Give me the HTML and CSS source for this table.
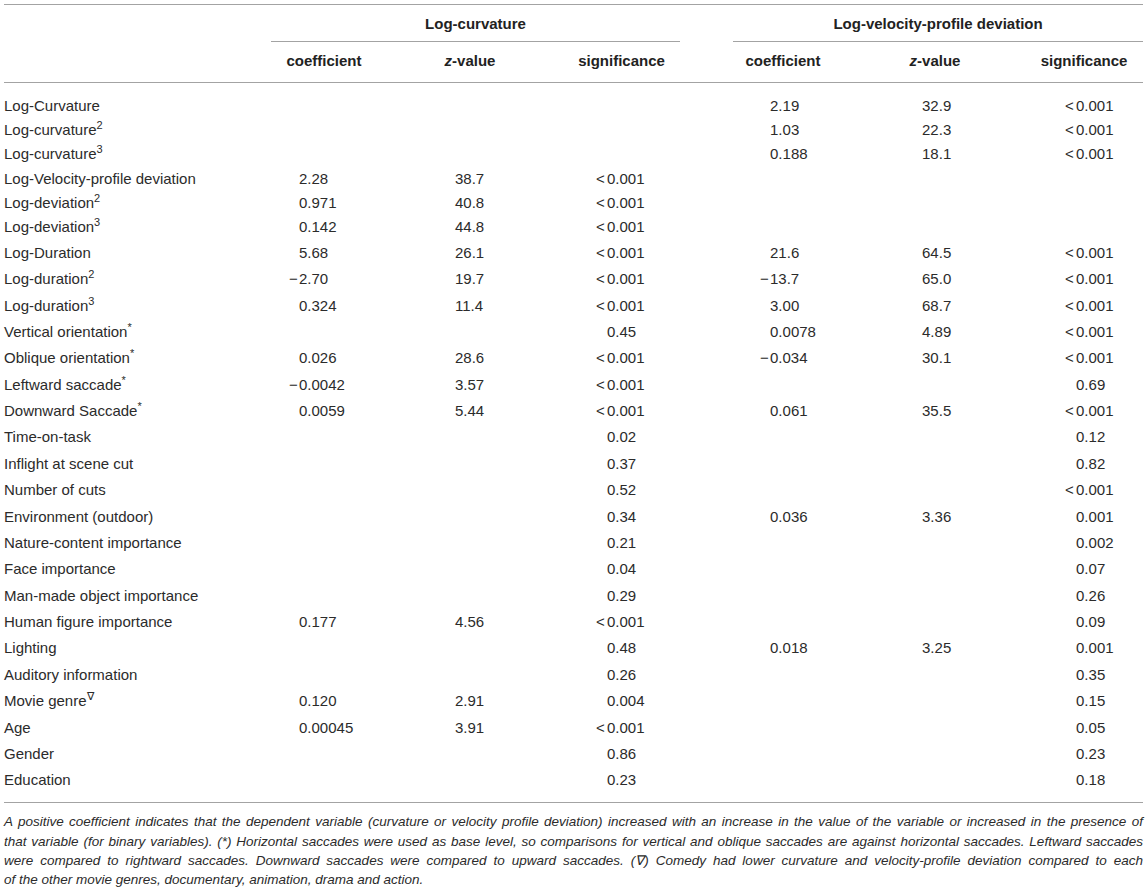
FILE: index.html
```html
<!DOCTYPE html>
<html>
<head>
<meta charset="utf-8">
<title>Table</title>
<link rel="stylesheet" href="styles.css">
</head>
<body>
<div class="page">
<table class="stats">
  <colgroup>
    <col class="c-lab"><col class="c-coef"><col class="c-z"><col class="c-sig">
    <col class="c-gap">
    <col class="c-coef2"><col class="c-z2"><col class="c-sig2">
  </colgroup>
  <thead>
    <tr class="grp">
      <th></th>
      <th colspan="3" class="grp-title">Log-curvature</th>
      <th></th>
      <th colspan="3" class="grp-title">Log-velocity-profile deviation</th>
    </tr>
    <tr class="sub">
      <th></th>
      <th>coefficient</th>
      <th><i>z</i>-value</th>
      <th>significance</th>
      <th></th>
      <th>coefficient</th>
      <th><i>z</i>-value</th>
      <th class="sig2">significance</th>
    </tr>
  </thead>
  <tbody>
    <tr class="tight first"><td>Log-Curvature</td><td class="v1"></td><td class="v2"></td><td class="v3"></td><td></td><td class="v4">2.19</td><td class="v5">32.9</td><td class="v6"><span class="lt">&lt;</span>0.001</td></tr>
    <tr class="tight"><td>Log-curvature<sup>2</sup></td><td class="v1"></td><td class="v2"></td><td class="v3"></td><td></td><td class="v4">1.03</td><td class="v5">22.3</td><td class="v6"><span class="lt">&lt;</span>0.001</td></tr>
    <tr class="tight"><td>Log-curvature<sup>3</sup></td><td class="v1"></td><td class="v2"></td><td class="v3"></td><td></td><td class="v4">0.188</td><td class="v5">18.1</td><td class="v6"><span class="lt">&lt;</span>0.001</td></tr>
    <tr class="tight"><td>Log-Velocity-profile deviation</td><td class="v1">2.28</td><td class="v2">38.7</td><td class="v3"><span class="lt">&lt;</span>0.001</td><td></td><td class="v4"></td><td class="v5"></td><td class="v6"></td></tr>
    <tr class="tight"><td>Log-deviation<sup>2</sup></td><td class="v1">0.971</td><td class="v2">40.8</td><td class="v3"><span class="lt">&lt;</span>0.001</td><td></td><td class="v4"></td><td class="v5"></td><td class="v6"></td></tr>
    <tr class="tight"><td>Log-deviation<sup>3</sup></td><td class="v1">0.142</td><td class="v2">44.8</td><td class="v3"><span class="lt">&lt;</span>0.001</td><td></td><td class="v4"></td><td class="v5"></td><td class="v6"></td></tr>
    <tr><td>Log-Duration</td><td class="v1">5.68</td><td class="v2">26.1</td><td class="v3"><span class="lt">&lt;</span>0.001</td><td></td><td class="v4">21.6</td><td class="v5">64.5</td><td class="v6"><span class="lt">&lt;</span>0.001</td></tr>
    <tr><td>Log-duration<sup>2</sup></td><td class="v1"><span class="neg">&minus;</span>2.70</td><td class="v2">19.7</td><td class="v3"><span class="lt">&lt;</span>0.001</td><td></td><td class="v4"><span class="neg">&minus;</span>13.7</td><td class="v5">65.0</td><td class="v6"><span class="lt">&lt;</span>0.001</td></tr>
    <tr><td>Log-duration<sup>3</sup></td><td class="v1">0.324</td><td class="v2">11.4</td><td class="v3"><span class="lt">&lt;</span>0.001</td><td></td><td class="v4">3.00</td><td class="v5">68.7</td><td class="v6"><span class="lt">&lt;</span>0.001</td></tr>
    <tr><td>Vertical orientation<sup>*</sup></td><td class="v1"></td><td class="v2"></td><td class="v3">0.45</td><td></td><td class="v4">0.0078</td><td class="v5">4.89</td><td class="v6"><span class="lt">&lt;</span>0.001</td></tr>
    <tr><td>Oblique orientation<sup>*</sup></td><td class="v1">0.026</td><td class="v2">28.6</td><td class="v3"><span class="lt">&lt;</span>0.001</td><td></td><td class="v4"><span class="neg">&minus;</span>0.034</td><td class="v5">30.1</td><td class="v6"><span class="lt">&lt;</span>0.001</td></tr>
    <tr><td>Leftward saccade<sup>*</sup></td><td class="v1"><span class="neg">&minus;</span>0.0042</td><td class="v2">3.57</td><td class="v3"><span class="lt">&lt;</span>0.001</td><td></td><td class="v4"></td><td class="v5"></td><td class="v6">0.69</td></tr>
    <tr><td>Downward Saccade<sup>*</sup></td><td class="v1">0.0059</td><td class="v2">5.44</td><td class="v3"><span class="lt">&lt;</span>0.001</td><td></td><td class="v4">0.061</td><td class="v5">35.5</td><td class="v6"><span class="lt">&lt;</span>0.001</td></tr>
    <tr><td>Time-on-task</td><td class="v1"></td><td class="v2"></td><td class="v3">0.02</td><td></td><td class="v4"></td><td class="v5"></td><td class="v6">0.12</td></tr>
    <tr><td>Inflight at scene cut</td><td class="v1"></td><td class="v2"></td><td class="v3">0.37</td><td></td><td class="v4"></td><td class="v5"></td><td class="v6">0.82</td></tr>
    <tr><td>Number of cuts</td><td class="v1"></td><td class="v2"></td><td class="v3">0.52</td><td></td><td class="v4"></td><td class="v5"></td><td class="v6"><span class="lt">&lt;</span>0.001</td></tr>
    <tr><td>Environment (outdoor)</td><td class="v1"></td><td class="v2"></td><td class="v3">0.34</td><td></td><td class="v4">0.036</td><td class="v5">3.36</td><td class="v6">0.001</td></tr>
    <tr><td>Nature-content importance</td><td class="v1"></td><td class="v2"></td><td class="v3">0.21</td><td></td><td class="v4"></td><td class="v5"></td><td class="v6">0.002</td></tr>
    <tr><td>Face importance</td><td class="v1"></td><td class="v2"></td><td class="v3">0.04</td><td></td><td class="v4"></td><td class="v5"></td><td class="v6">0.07</td></tr>
    <tr><td>Man-made object importance</td><td class="v1"></td><td class="v2"></td><td class="v3">0.29</td><td></td><td class="v4"></td><td class="v5"></td><td class="v6">0.26</td></tr>
    <tr><td>Human figure importance</td><td class="v1">0.177</td><td class="v2">4.56</td><td class="v3"><span class="lt">&lt;</span>0.001</td><td></td><td class="v4"></td><td class="v5"></td><td class="v6">0.09</td></tr>
    <tr><td>Lighting</td><td class="v1"></td><td class="v2"></td><td class="v3">0.48</td><td></td><td class="v4">0.018</td><td class="v5">3.25</td><td class="v6">0.001</td></tr>
    <tr><td>Auditory information</td><td class="v1"></td><td class="v2"></td><td class="v3">0.26</td><td></td><td class="v4"></td><td class="v5"></td><td class="v6">0.35</td></tr>
    <tr><td>Movie genre<sup>&nabla;</sup></td><td class="v1">0.120</td><td class="v2">2.91</td><td class="v3">0.004</td><td></td><td class="v4"></td><td class="v5"></td><td class="v6">0.15</td></tr>
    <tr><td>Age</td><td class="v1">0.00045</td><td class="v2">3.91</td><td class="v3"><span class="lt">&lt;</span>0.001</td><td></td><td class="v4"></td><td class="v5"></td><td class="v6">0.05</td></tr>
    <tr><td>Gender</td><td class="v1"></td><td class="v2"></td><td class="v3">0.86</td><td></td><td class="v4"></td><td class="v5"></td><td class="v6">0.23</td></tr>
    <tr class="last"><td>Education</td><td class="v1"></td><td class="v2"></td><td class="v3">0.23</td><td></td><td class="v4"></td><td class="v5"></td><td class="v6">0.18</td></tr>
  </tbody>
</table>
<p class="note">
  <span class="ln">A positive coefficient indicates that the dependent variable (curvature or velocity profile deviation) increased with an increase in the value of the variable or increased in the presence of</span>
  <span class="ln">that variable (for binary variables). (*) Horizontal saccades were used as base level, so comparisons for vertical and oblique saccades are against horizontal saccades. Leftward saccades</span>
  <span class="ln">were compared to rightward saccades. Downward saccades were compared to upward saccades. (&nabla;) Comedy had lower curvature and velocity-profile deviation compared to each</span>
  <span class="ln end">of the other movie genres, documentary, animation, drama and action.</span>
</p>
</div>
</body>
</html>
```

FILE: styles.css
```css
html, body {
  margin: 0;
  padding: 0;
  background: #ffffff;
}

.page {
  padding: 4px;
  font-family: "Liberation Sans", Arial, sans-serif;
  color: #2b2b2b;
}

.stats {
  width: 1139px;
  table-layout: fixed;
  border-collapse: separate;
  border-spacing: 0;
  border-top: 1px solid #a3a3a3;
  font-size: 15px;
  line-height: 18px;
}

.c-lab { width: 267px; }
.c-coef { width: 106px; }
.c-z { width: 186px; }
.c-sig { width: 117px; }
.c-gap { width: 53px; }
.c-coef2 { width: 100px; }
.c-z2 { width: 204px; }
.c-sig2 { width: 106px; }

.stats th {
  font-weight: bold;
  text-align: center;
  padding: 0;
  white-space: nowrap;
  color: #222;
}

.grp th {
  padding: 10px 0 8px;
}

.grp .grp-title {
  border-bottom: 1px solid #a3a3a3;
}

.sub th {
  padding: 10px 0 12px;
  border-bottom: 1px solid #a3a3a3;
}

.sub .sig2 {
  padding-right: 12px;
}

.stats td {
  padding: 4.2px 0;
  text-align: left;
  white-space: nowrap;
  vertical-align: middle;
}

.stats tr.tight td {
  padding-top: 3.2px;
  padding-bottom: 3.2px;
}

.stats tr.first td {
  padding-top: 13.5px;
}

.stats tr.last td {
  padding-bottom: 13px;
  border-bottom: 1px solid #a3a3a3;
}

.stats td.v1 { padding-left: 28px; }
.stats td.v2 { padding-left: 78px; }
.stats td.v3 { padding-left: 44px; }
.stats td.v4 { padding-left: 37px; }
.stats td.v5 { padding-left: 89px; }
.stats td.v6 { padding-left: 39px; }

.neg {
  margin-left: -10px;
  margin-right: 1.2px;
}

.lt {
  margin-left: -11px;
  margin-right: 2.2px;
}

sup {
  font-size: 11px;
  line-height: 0;
  vertical-align: 6px;
}

.note {
  margin: 0;
  padding-top: 9px;
  font-size: 13.5px;
  font-style: italic;
  line-height: 19.4px;
  color: #2b2b2b;
}

.note .ln {
  display: block;
  text-align: justify;
  text-align-last: justify;
  white-space: nowrap;
}

.note .ln.end {
  text-align-last: left;
}
```
